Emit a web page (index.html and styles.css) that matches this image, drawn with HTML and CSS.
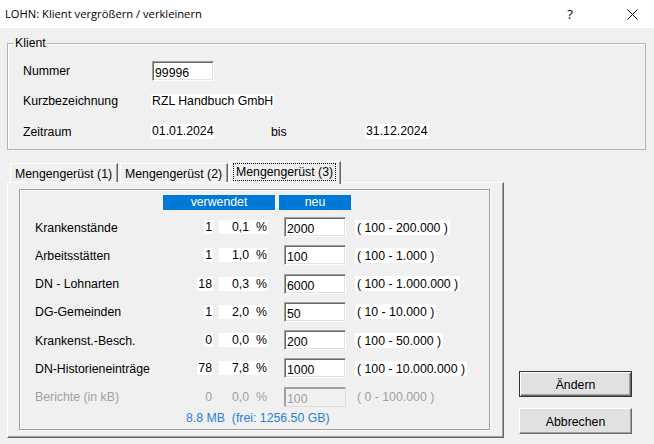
FILE: index.html
```html
<!DOCTYPE html>
<html lang="de">
<head>
<meta charset="utf-8">
<title>LOHN: Klient vergrößern / verkleinern</title>
<link rel="stylesheet" href="styles.css">
</head>
<body>
<div class="titlebar">
  <span class="title">LOHN: Klient vergrößern / verkleinern</span>
  <span class="tb-help">?</span>
  <span class="tb-close"><svg width="11" height="11" viewBox="0 0 11 11"><path d="M0.5 0.5 L10.5 10.5 M10.5 0.5 L0.5 10.5" stroke="#000" stroke-width="1" fill="none"/></svg></span>
</div>
<div class="content">
  <fieldset class="klient">
    <legend>Klient</legend>
    <div class="kgrid">
      <span class="klabel">Nummer</span><span class="edit knum">99996</span>
      <span class="klabel">Kurzbezeichnung</span><span class="val kname">RZL Handbuch GmbH</span>
      <span class="klabel">Zeitraum</span><span class="val">01.01.2024</span><span class="bis">bis</span><span class="val">31.12.2024</span>
    </div>
  </fieldset>
  <div class="lower">
    <div class="tabctl">
      <div class="tabs">
        <div class="tab t1">Mengengerüst (1)</div>
        <div class="tab t2">Mengengerüst (2)</div>
        <div class="tab active"><span class="focus">Mengengerüst (3)</span></div>
      </div>
      <div class="panel">
        <div class="group">
          <div class="hdr">
            <span class="hbar hv">verwendet</span>
            <span class="hbar hn">neu</span>
          </div>
          <div class="rows">
            <span class="lbl">Krankenstände</span><span class="cnt"><span class="bg">1</span></span><span class="pct"><span>0,1</span><span class="pc">%</span></span><span class="edit inp">2000</span><span class="rng"><span class="bg">( 100 - 200.000 )</span></span>
            <span class="lbl">Arbeitsstätten</span><span class="cnt"><span class="bg">1</span></span><span class="pct"><span>1,0</span><span class="pc">%</span></span><span class="edit inp">100</span><span class="rng"><span class="bg">( 100 - 1.000 )</span></span>
            <span class="lbl">DN - Lohnarten</span><span class="cnt"><span class="bg">18</span></span><span class="pct"><span>0,3</span><span class="pc">%</span></span><span class="edit inp">6000</span><span class="rng"><span class="bg">( 100 - 1.000.000 )</span></span>
            <span class="lbl">DG-Gemeinden</span><span class="cnt"><span class="bg">1</span></span><span class="pct"><span>2,0</span><span class="pc">%</span></span><span class="edit inp">50</span><span class="rng"><span class="bg">( 10 - 10.000 )</span></span>
            <span class="lbl">Krankenst.-Besch.</span><span class="cnt"><span class="bg">0</span></span><span class="pct"><span>0,0</span><span class="pc">%</span></span><span class="edit inp">200</span><span class="rng"><span class="bg">( 100 - 50.000 )</span></span>
            <span class="lbl">DN-Historieneinträge</span><span class="cnt"><span class="bg">78</span></span><span class="pct"><span>7,8</span><span class="pc">%</span></span><span class="edit inp">1000</span><span class="rng"><span class="bg">( 100 - 10.000.000 )</span></span>
            <span class="lbl dis">Berichte (in kB)</span><span class="cnt dis"><span class="bg nobg">0</span></span><span class="pct dis nobg"><span>0,0</span><span class="pc">%</span></span><span class="edit inp disabled">100</span><span class="rng dis"><span class="bg nobg">( 0 - 100.000 )</span></span>
          </div>
          <div class="total">8.8 MB  (frei: 1256.50 GB)</div>
        </div>
      </div>
    </div>
    <div class="buttons">
      <div class="btn default">Ändern</div>
      <div class="btn">Abbrechen</div>
    </div>
  </div>
</div>
</body>
</html>
```

FILE: styles.css
```css
* { box-sizing: border-box; }
html, body { margin: 0; padding: 0; }
body {
  width: 654px;
  height: 444px;
  overflow: hidden;
  background: #f0f0f0;
  font-family: "Liberation Sans", Arial, sans-serif;
  font-size: 12.3px;
  line-height: 14px;
  color: #000;
}

/* title bar */
.titlebar {
  height: 28px;
  background: #fff;
  display: flex;
  align-items: center;
  font-family: "Open Sans", "Noto Sans", sans-serif;
  font-size: 11.2px;
}
.title { flex: 1; padding-left: 5px; }
.tb-help { width: 8px; text-align: center; font-size: 13px; }
.tb-close { display: flex; margin-left: 53px; margin-right: 16px; }

.content { padding: 0 8px 0 7px; }

/* Klient group */
.klient {
  margin: 8px 0 0;
  padding: 0;
  border: 1px solid #b4b4b4;
  box-shadow: inset 1px 1px 0 #fff;
  min-width: 0;
}
.klient legend {
  margin-left: 6px;
  padding: 0 1px;
  line-height: 14px;
}
.kgrid {
  display: grid;
  grid-template-columns: 128px 120px 94px 1fr;
  grid-template-rows: 30px 30px 31px;
  align-items: center;
  padding: 6px 0 2px 15px;
}
.klabel { grid-column: 1; }
.knum { grid-column: 2; margin-left: 1px; width: 62px; }
.kname { grid-column: 2 / 5; }
.val {
  justify-self: start;
  background: #fff;
  line-height: 15px;
  padding: 0 1px;
}
.bis { justify-self: start; }

/* edit boxes */
.edit {
  display: block;
  height: 20px;
  background: #fff;
  border: 1px solid;
  border-color: #a0a0a0 #fff #fff #a0a0a0;
  box-shadow: inset 1px 1px 0 #696969, inset -1px -1px 0 #e3e3e3;
  padding: 4px 0 0 2px;
  line-height: 14px;
}

/* lower area */
.lower {
  display: flex;
  align-items: flex-end;
  margin-top: 11px;
}
.tabctl { width: 497px; }
.tabs {
  display: flex;
  align-items: flex-end;
  height: 21px;
  padding-left: 3px;
}
.tab {
  height: 19px;
  width: 108px;
  border-top: 1px solid #fff;
  border-left: 1px solid #fff;
  border-right: 1px solid #696969;
  box-shadow: inset -1px 0 0 #a0a0a0;
  padding: 3px 0 0 4px;
  white-space: nowrap;
}
.t2 { margin-left: 2px; }
.tab.active {
  position: relative;
  z-index: 1;
  margin-left: 1px;
  width: 112px;
  height: 23px;
  margin-bottom: -2px;
  background: #f0f0f0;
  padding: 1px 0 2px 3px;
}
.focus {
  display: inline-block;
  border: 1px dotted #000;
  padding: 1px 2px;
}
.panel {
  height: 256px;
  border-top: 1px solid #fff;
  border-left: 1px solid #fff;
  border-right: 1px solid #696969;
  border-bottom: 1px solid #696969;
  box-shadow: inset -1px -1px 0 #a0a0a0;
  padding: 6px 0 0 11px;
}
.group {
  width: 471px;
  height: 241px;
  border: 1px solid #a0a0a0;
  box-shadow: inset 1px 1px 0 #fff, 1px 1px 0 #fff;
}
.hdr {
  display: flex;
  gap: 4px;
  margin: 5px 0 0 143px;
}
.hbar {
  height: 15px;
  line-height: 15px;
  background: #0078d7;
  color: #fff;
  text-align: center;
}
.hv { width: 112px; }
.hn { width: 72px; }

.rows {
  display: grid;
  grid-template-columns: 165px 28px 55px 78px 1fr;
  grid-auto-rows: 28.25px;
  align-items: center;
  margin-top: 3px;
}
.lbl { padding-left: 15px; padding-top: 1px; }
.cnt { text-align: right; }
.bg { background: #fff; padding: 0 1px; }
.pct {
  margin-left: 6px;
  width: 49px;
  background: #fff;
  display: flex;
  justify-content: flex-end;
  gap: 7px;
  padding-right: 1px;
}
.inp { margin-left: 16px; width: 62px; }
.rng { margin-left: 9px; }
.rng .bg { padding: 1px 2px 0 2px; line-height: 14px; display: inline-block; }
.dis { color: #a0a0a0; }
.nobg { background: transparent; }
.edit.disabled {
  background: #f0f0f0;
  color: #a0a0a0;
  border-color: #a0a0a0 #dcdcdc #dcdcdc #a0a0a0;
  box-shadow: inset 1px 1px 0 #a0a0a0;
}
.total {
  margin-left: 166px;
  color: #2a7fd6;
  white-space: pre;
  line-height: 14px;
}

/* buttons */
.buttons {
  display: flex;
  flex-direction: column;
  gap: 11px;
  margin: 0 0 4px 15px;
}
.btn {
  width: 113px;
  height: 26px;
  display: flex;
  align-items: center;
  justify-content: center;
  padding-top: 1px;
  background: #e1e1e1;
  border: 1px solid;
  border-color: #fff #696969 #696969 #fff;
  box-shadow: inset -1px -1px 0 #a0a0a0;
}
.btn.default {
  border: 1px solid #333;
  box-shadow: inset 1px 1px 0 #fff, inset -1px -1px 0 #696969, inset -2px -2px 0 #a0a0a0;
}
```
